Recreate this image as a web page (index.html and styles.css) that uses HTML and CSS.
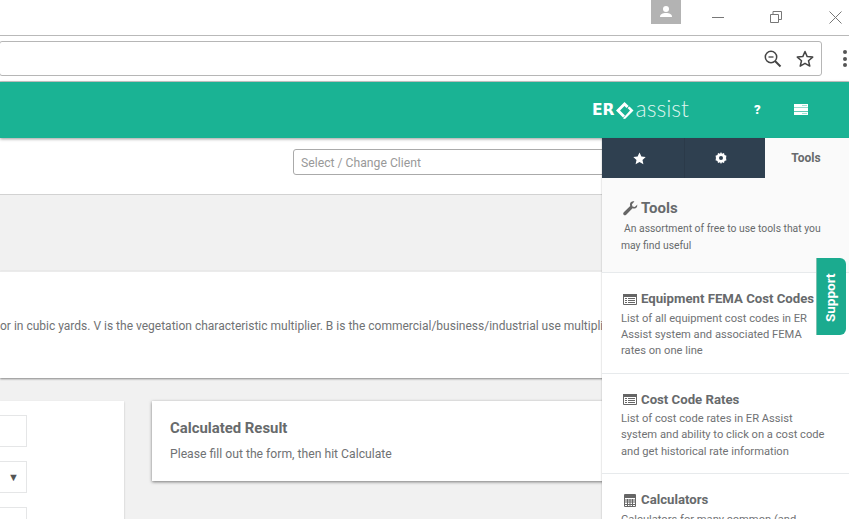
FILE: index.html
```html
<!DOCTYPE html>
<html lang="en">
<head>
<meta charset="utf-8">
<title>ER Assist</title>
<link rel="stylesheet" href="styles.css">
</head>
<body>
<div class="window">
  <div class="titlebar">
    <div class="profile"><svg width="14" height="14" viewBox="0 0 14 14"><circle cx="7" cy="4" r="3" fill="#fff"/><path d="M1 12c0-3 2.500-4 6-4s6 1 6 4z" fill="#fff"/></svg></div>
    <div class="winbtn min"><svg width="12" height="12" viewBox="0 0 12 12"><path d="M0 6.500h12" stroke="#777" fill="none"/></svg></div>
    <div class="winbtn restore"><svg width="12" height="12" viewBox="0 0 12 12"><path d="M.5 3.500h8v8h-8zM3 3.500V.5h8.500v8H8.500" stroke="#777" fill="none"/></svg></div>
    <div class="winbtn close"><svg width="13" height="13" viewBox="0 0 13 13"><path d="M.5.500l12 12M12.500.5l-12 12" stroke="#777" fill="none"/></svg></div>
  </div>
  <div class="toolbar">
    <div class="omnibox">
      <svg class="omni-icon" width="18" height="18" viewBox="0 0 18 18"><circle cx="7" cy="7" r="5.700" fill="none" stroke="#444" stroke-width="1.500"/><path d="M4.500 7h5" stroke="#444" stroke-width="1.300"/><path d="M11 11l5.500 5.500" stroke="#444" stroke-width="2"/></svg>
      <svg class="omni-icon" width="18" height="18" viewBox="0 0 18 18"><path d="M9 1.500l2.200 5.100 5.500.5-4.200 3.600 1.300 5.400L9 13.300l-4.800 2.800 1.300-5.400L1.300 7.100l5.500-.5z" fill="none" stroke="#444" stroke-width="1.500" stroke-linejoin="round"/></svg>
    </div>
    <div class="menu-dots"><i></i><i></i><i></i></div>
  </div>
  <div class="page">
    <header class="topbar">
      <div class="logo"><span class="logo-er">ER</span><svg class="logo-mark" width="18" height="17" viewBox="0 0 18 17"><path d="M8.500 0L0 8.500 7 15.500l2-2-5-5L8.500 4l2 2 2.200-2z" fill="#fff"/><path d="M13.500 4.500L17.500 8.500 9 17l-2-.5 1-1.500 1.500-1.500 4.500-5-2.500-2.500z" fill="#fff"/></svg><span class="logo-assist">assist</span></div>
      <span class="help">?</span>
      <svg class="menu-icon" width="14" height="11" viewBox="0 0 14 11"><path d="M0 0h14v11H0z" fill="#fff"/><path d="M0 3.500h14" stroke="#1ab394" stroke-opacity=".45"/><path d="M0 7.500h14" stroke="#1ab394" stroke-opacity=".7"/><path d="M8 1.500h5M8 9.500h5" stroke="#a5e3d5"/></svg>
    </header>
    <div class="clientbar">
      <div class="client-input">Select / Change Client</div>
    </div>
    <div class="band"></div>
    <div class="formula">
      <p>or in cubic yards. V is the vegetation characteristic multiplier. B is the commercial/business/industrial use multiplier and the rest of the formula applies.</p>
    </div>
    <div class="workarea">
      <section class="formcard">
        <div class="field"></div>
        <div class="field select"><span>▼</span></div>
        <div class="field"></div>
      </section>
      <section class="resultcard">
        <h2>Calculated Result</h2>
        <p>Please fill out the form, then hit Calculate</p>
      </section>
    </div>
  </div>
  <aside class="panel">
    <div class="tabs">
      <div class="tab dark"><svg width="13" height="13" viewBox="0 0 13 13"><path d="M6.500.5l1.900 4 4.300.5-3.200 3 .9 4.300-3.900-2.200-3.900 2.200.9-4.300-3.200-3 4.300-.5z" fill="#fff"/></svg></div>
      <div class="tab dark second"><svg width="12" height="12" viewBox="0 0 12 12"><path d="M6 0l1 1.700 2-.6.5 2 2 .6-.6 2L12 6l-1.100.3.600 2-2 .6-.5 2-2-.6L6 12l-1-1.700-2 .6-.5-2-2-.6.600-2L0 6l1.100-.3-.6-2 2-.6.5-2 2 .6z" fill="#fff"/><circle cx="6" cy="6" r="2" fill="#2f4050"/></svg></div>
      <div class="tab active">Tools</div>
    </div>
    <div class="panel-head">
      <h3><svg width="15" height="15" viewBox="0 0 15 15"><path d="M14.500 3.500l-2.800 2.500-2.200-.6-.6-2.200L11.400.5C9.500-.2 7.300.9 7 3c-.1.700 0 1.300.2 1.900L.8 11.300c-.8.800-.8 1.800-.1 2.500s1.700.7 2.500-.1l6.400-6.400c2.700.9 5.500-1.200 4.400-3.800z" fill="#666"/></svg> Tools</h3>
      <p><span class="indent">An assortment of free to use tools that you</span> may find useful</p>
    </div>
    <a class="item">
      <h4><svg width="14" height="11" viewBox="0 0 14 11"><path d="M.5.500h13v10H.500z" fill="#fff" stroke="#666"/><path d="M0 0h14v3H0z" fill="#666"/><path d="M2 4.500h2M5 4.500h7M2 6.500h2M5 6.500h7M2 8.500h2M5 8.500h7" stroke="#666"/></svg> Equipment FEMA Cost Codes</h4>
      <p>List of all equipment cost codes in ER Assist system and associated FEMA rates on one line</p>
    </a>
    <a class="item">
      <h4><svg width="14" height="11" viewBox="0 0 14 11"><path d="M.5.500h13v10H.500z" fill="#fff" stroke="#666"/><path d="M0 0h14v3H0z" fill="#666"/><path d="M2 4.500h2M5 4.500h7M2 6.500h2M5 6.500h7M2 8.500h2M5 8.500h7" stroke="#666"/></svg> Cost Code Rates</h4>
      <p>List of cost code rates in ER Assist system and ability to click on a cost code and get historical rate information</p>
    </a>
    <a class="item">
      <h4><svg width="14" height="13" viewBox="0 0 12 13"><path d="M.5.500h11v12H.500z" fill="#fff" stroke="#666"/><path d="M1 1h10v3H1z" fill="#666"/><path d="M1 6h10M1 8h10M1 10.500h10M3.500 5v7M6 5v7M8.500 5v7" stroke="#666"/></svg> Calculators</h4>
      <p>Calculators for many common (and not&nbsp;so&nbsp;common) calculations</p>
    </a>
  </aside>
  <div class="support">Support</div>
</div>
</body>
</html>
```
FILE: styles.css
```css
* { box-sizing: border-box; }
html, body { margin: 0; height: 100%; overflow: hidden; }
body { font-family: Roboto, "Liberation Sans", sans-serif; color: #676a6c; }
.window { position: relative; width: 849px; height: 519px; overflow: hidden; display: flex; flex-direction: column; background: #f1f1f1; }

.titlebar { height: 36px; flex: none; background: #fff; border-bottom: 1px solid #b9b9b9; display: flex; align-items: flex-start; }
.profile { width: 30px; height: 24px; margin-left: 651px; background: #b3b3b3; display: flex; align-items: center; justify-content: center; }
.winbtn { display: flex; align-items: center; justify-content: center; height: 34px; }
.winbtn.min { width: 12px; margin-left: 31px; }
.winbtn.restore { width: 12px; margin-left: 46px; }
.winbtn.close { width: 13px; margin-left: 47px; }

.toolbar { height: 46px; flex: none; background: #fff; border-bottom: 1px solid #c9c9c9; display: flex; align-items: center; }
.omnibox { width: 823px; height: 35px; margin-left: -1px; flex: none; border: 1px solid #b6b6b6; border-radius: 3px; display: flex; align-items: center; justify-content: flex-end; gap: 14px; padding-right: 7px; }
.menu-dots { margin-left: 21px; display: flex; flex-direction: column; gap: 2.300px; flex: none; }
.menu-dots i { width: 4px; height: 4px; border-radius: 50%; background: #555; display: block; }

.page { flex: 1; display: flex; flex-direction: column; min-height: 0; }
.topbar { height: 56px; flex: none; background: #1ab394; box-shadow: 0 1px 3px rgba(0,0,0,.4); position: relative; z-index: 1; display: flex; align-items: center; }
.logo { margin-left: 592px; display: flex; align-items: center; color: #fff; width: 97px; flex: none; }
.logo-er { font-family: "DejaVu Sans", sans-serif; font-weight: 700; font-size: 15.500px; width: 25px; }
.logo-mark { flex: none; }
.logo-assist { font-family: Lato, sans-serif; font-weight: 300; font-size: 23px; color: #dff5ef; line-height: 1; margin-left: 2px; position: relative; top: -2px; }
.help { margin-left: 65px; font-weight: 900; color: #fff; font-size: 13px; width: 8px; flex: none; margin-bottom: 2px; }
.menu-icon { margin-left: 32px; flex: none; margin-bottom: 2px; }

.clientbar { height: 57px; flex: none; background: #fff; border-bottom: 1px solid #d2d2d2; padding-top: 11px; padding-left: 293px; }
.client-input { width: 400px; height: 26px; border: 1px solid #aaa; border-radius: 3px; color: #999; font-size: 12.200px; line-height: 26px; padding-left: 7px; background: #fff; }

.band { height: 76px; flex: none; background: #f1f1f1; }

.formula { height: 107px; flex: none; background: #fff; border-top: 1px solid #ebebeb; box-shadow: 0 1px 2px rgba(0,0,0,.45); padding-top: 46px; }
.formula p { margin: 0; font-size: 12px; line-height: 16px; white-space: nowrap; color: #707274; }

.workarea { flex: 1; display: flex; align-items: flex-start; padding-top: 23px; gap: 28px; }
.formcard { width: 124px; height: 140px; flex: none; background: #fff; box-shadow: 0 1px 2px rgba(0,0,0,.2); padding-top: 14px; display: flex; flex-direction: column; gap: 14px; }
.field { width: 27px; height: 32px; background: #fff; border: 1px solid #e5e6e7; border-left: 0; display: flex; align-items: center; justify-content: flex-end; padding-right: 7px; }
.field.select span { font-size: 11px; color: #555; }
.resultcard { width: 500px; height: 80px; background: #fff; box-shadow: 0 1px 3px rgba(0,0,0,.5); padding: 18px 18px; }
.resultcard h2 { margin: 0; font-size: 14.900px; line-height: 19px; font-weight: 700; color: #676a6c; }
.resultcard p { margin: 8px 0 0; font-size: 12.200px; line-height: 16px; color: #707274; }

.panel { position: absolute; left: 602px; top: 138px; width: 247px; height: 381px; background: #fff; overflow: hidden; z-index: 2; box-shadow: -1px 0 1px rgba(0,0,0,.08); }
.tabs { display: flex; height: 40px; }
.tab { display: flex; align-items: center; justify-content: center; }
.tab.dark { width: 81.500px; background: #2f4050; padding-right: 6px; }
.tab.second { border-left: 1px solid #2b3a49; padding-right: 8px; }
.tab.active { flex: 1; background: #fafafa; font-size: 12px; font-weight: 700; padding-right: 2px; color: #676a6c; }
.panel-head { height: 95px; background: #fafafa; border-bottom: 1px solid #e7eaec; padding: 20px 19px 0; }
.panel-head h3 { margin: 0; font-size: 15px; line-height: 20px; font-weight: 700; display: flex; align-items: center; gap: 3px; margin-left: 2px; }
.panel-head p { margin: 3px 0 0; font-size: 10.350px; line-height: 16.500px; }
.indent { margin-left: 3px; }
.item { display: block; background: #fff; border-bottom: 1px solid #e7eaec; padding: 17px 22px 12.800px 19px; }
.item h4 { margin: 0 0 0 2px; font-size: 13.200px; line-height: 18px; font-weight: 700; white-space: nowrap; display: flex; align-items: center; gap: 4px; }
.item p { margin: 2.500px 0 0; font-size: 11.160px; line-height: 16.400px; color: #707274; }

.support { position: absolute; left: 816px; top: 258px; width: 30px; height: 77px; z-index: 3; background: #1bab8f; border-right: 1px solid #7fc2b0; padding-left: 3px; padding-bottom: 2px; color: #fff; font-size: 13.500px; font-weight: 700; border-radius: 6px 0 0 6px; writing-mode: vertical-rl; transform: rotate(180deg); display: flex; align-items: center; justify-content: center; }
```
